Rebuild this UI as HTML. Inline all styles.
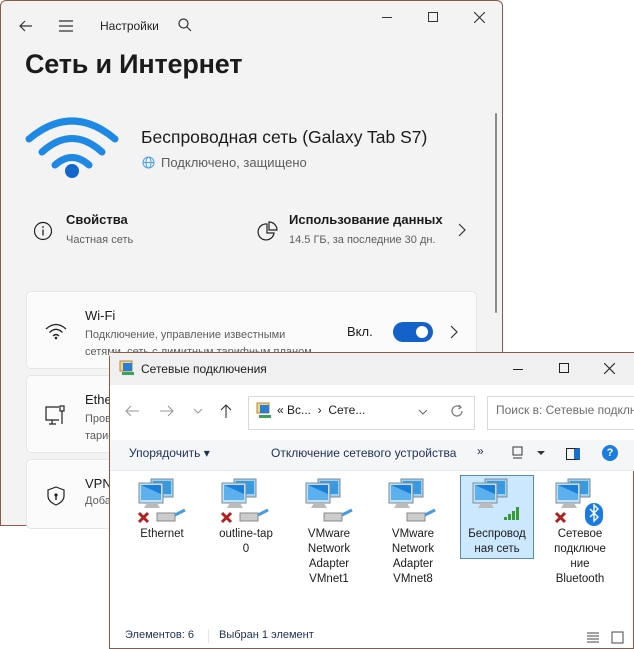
<!DOCTYPE html>
<html><head><meta charset="utf-8"><style>
*{box-sizing:border-box;margin:0;padding:0}
body{width:634px;height:649px;background:#fff;position:relative;overflow:hidden;font-family:"Liberation Sans","Noto Sans CJK SC",sans-serif;color:#1b1b1b}
.a{position:absolute}
#set{left:0;top:0;width:503px;height:526px;background:#f3f3f3;border:1px solid #8a5a48;border-radius:6px 6px 0 0}
.card{position:absolute;left:25px;width:451px;background:#fbfbfb;border:1px solid #e6e6e6;border-radius:5px}
.t{font-size:13px}
.s{font-size:11px;color:#5d5d5d}
#exp{left:109px;top:352px;width:525px;height:297px;background:#fff;border:1px solid #8a5a48;border-radius:6px 0 0 0}
.lbl{position:absolute;font-size:11.5px;text-align:center;width:76px;line-height:15px;color:#1b1b1b}
</style></head><body>
<div id="set" class="a">
 <svg class="a" style="left:16px;top:16px" width="18" height="18"><path d="M15 9H3M8 4L3 9l5 5" stroke="#333" stroke-width="1.2" fill="none"/></svg>
 <svg class="a" style="left:56px;top:16px" width="18" height="18"><path d="M2 4h14M2 9h14M2 14h14" stroke="#333" stroke-width="1.2"/></svg>
 <div class="a" style="left:99px;top:18px;font-size:12px;color:#222">Настройки</div>
 <svg class="a" style="left:176px;top:16px" width="16" height="16"><circle cx="6.5" cy="6.5" r="4.5" stroke="#333" stroke-width="1.2" fill="none"/><path d="M10 10l4 4" stroke="#333" stroke-width="1.2"/></svg>
 <div class="a" style="left:381px;top:16px;width:10px;height:1px;background:#333"></div>
 <div class="a" style="left:427px;top:11px;width:10px;height:10px;border:1px solid #333"></div>
 <svg class="a" style="left:473px;top:11px" width="11" height="11"><path d="M0 0l11 11M11 0L0 11" stroke="#333" stroke-width="1.1"/></svg>
 <div class="a" style="left:24px;top:48px;font-size:27px;font-weight:bold;color:#1b1b1b;letter-spacing:-0.2px">Сеть и Интернет</div>
 <div class="a" style="left:494px;top:112px;width:2px;height:200px;background:#8a8a8a;border-radius:1px"></div>
 <svg class="a" style="left:24px;top:110px" width="95" height="70"><g stroke="#1e88e5" stroke-width="7" fill="none" stroke-linecap="round"><path d="M4 28Q47 -8 90 28"/><path d="M17 41Q47 14 77 41"/><path d="M30 54Q47 39 64 54"/></g><circle cx="47" cy="60" r="7" fill="#1466cc"/></svg>
 <div class="a" style="left:140px;top:126px;font-size:17.5px;color:#1b1b1b">Беспроводная сеть (Galaxy Tab S7)</div>
 <svg class="a" style="left:141px;top:155px" width="13" height="13"><circle cx="6.5" cy="6.5" r="5.5" fill="none" stroke="#4aa0e6"/><ellipse cx="6.5" cy="6.5" rx="2.5" ry="5.5" fill="none" stroke="#4aa0e6"/><path d="M1 6.5h11" stroke="#4aa0e6"/></svg>
 <div class="a" style="left:160px;top:154px;font-size:13px;color:#5d5d5d">Подключено, защищено</div>
 <svg class="a" style="left:32px;top:220px" width="20" height="20"><circle cx="10" cy="10" r="8.5" fill="none" stroke="#222" stroke-width="1.2"/><path d="M10 8.5v6" stroke="#222" stroke-width="1.3"/><circle cx="10" cy="6" r=".9" fill="#222"/></svg>
 <div class="a t" style="left:65px;top:211px;font-weight:bold">Свойства</div>
 <div class="a s" style="left:65px;top:233px">Частная сеть</div>
 <svg class="a" style="left:255px;top:219px" width="22" height="22"><path d="M11 4A8 8 0 1 0 18 13H11Z" fill="none" stroke="#222" stroke-width="1.2"/><path d="M13 2v8h8A8 8 0 0 0 13 2Z" fill="none" stroke="#222" stroke-width="1.2"/></svg>
 <div class="a t" style="left:288px;top:211px;font-weight:bold">Использование данных</div>
 <div class="a s" style="left:288px;top:233px">14.5 ГБ, за последние 30 дн.</div>
 <svg class="a" style="left:456px;top:222px" width="10" height="14"><path d="M2 1l6 6-6 6" stroke="#333" stroke-width="1.2" fill="none"/></svg>
 <div class="card" style="top:290px;height:78px">
  <svg class="a" style="left:18px;top:30px" width="22" height="18"><g stroke="#222" stroke-width="1.3" fill="none"><path d="M1 7Q11 -2 21 7"/><path d="M4.5 10.5Q11 4 17.5 10.5"/><path d="M8 14Q11 11 14 14"/></g><circle cx="11" cy="16" r="1.3" fill="#222"/></svg>
  <div class="a t" style="left:58px;top:16px">Wi-Fi</div>
  <div class="a s" style="left:58px;top:35px;line-height:17px">Подключение, управление известными<br>сетями, сеть с лимитным тарифным планом</div>
  <div class="a t" style="left:320px;top:32px">Вкл.</div>
  <div class="a" style="left:366px;top:30px;width:40px;height:20px;border-radius:10px;background:#1361c9"><div class="a" style="left:23px;top:4px;width:12px;height:12px;border-radius:6px;background:#fff"></div></div>
  <svg class="a" style="left:422px;top:33px" width="10" height="14"><path d="M2 1l6 6-6 6" stroke="#333" stroke-width="1.2" fill="none"/></svg>
 </div>
 <div class="card" style="top:374px;height:78px">
  <svg class="a" style="left:18px;top:29px" width="22" height="22"><g stroke="#222" stroke-width="1.2" fill="none"><path d="M14 2H1v13h13"/><path d="M7 15v4M4 19h7"/><rect x="15" y="1" width="4" height="5"/><path d="M17 6v13"/></g></svg>
  <div class="a t" style="left:58px;top:16px">Ethernet</div>
  <div class="a s" style="left:58px;top:35px;line-height:17px">Проверка<br>тарифный</div>
 </div>
 <div class="card" style="top:458px;height:70px">
  <svg class="a" style="left:19px;top:26px" width="20" height="20"><path d="M10 1L18 4v6c0 4-3.5 7-8 9-4.5-2-8-5-8-9V4Z" fill="none" stroke="#222" stroke-width="1.2"/><circle cx="10" cy="9" r="1.6" fill="#222"/><path d="M10 10v4" stroke="#222" stroke-width="1.4"/></svg>
  <div class="a t" style="left:58px;top:16px">VPN</div>
  <div class="a s" style="left:58px;top:35px">Добавить</div>
 </div>
</div>

<div id="exp" class="a">
 <div class="a" style="left:0;top:0;width:524px;height:32px;background:#f0f0f0"></div>
 <svg class="a" style="left:9px;top:7px" width="17" height="17"><rect x="1" y="1" width="12" height="10" fill="#f4d48a" stroke="#b08a3a"/><rect x="4" y="3" width="9" height="8" fill="#2a7fd4"/><rect x="3" y="12" width="12" height="3" fill="#3aa05a"/></svg>
 <div class="a" style="left:31px;top:9px;font-size:12px;color:#1b1b1b">Сетевые подключения</div>
 <div class="a" style="left:403px;top:16px;width:10px;height:1px;background:#222"></div>
 <div class="a" style="left:449px;top:10px;width:10px;height:10px;border:1px solid #222"></div>
 <svg class="a" style="left:494px;top:10px" width="11" height="11"><path d="M0 0l11 11M11 0L0 11" stroke="#222" stroke-width="1.1"/></svg>
 <div class="a" style="left:0;top:32px;width:524px;height:55px;background:#fff"></div>
 <svg class="a" style="left:14px;top:51px" width="16" height="14"><path d="M15 7H2M7 2L2 7l5 5" stroke="#999" stroke-width="1.1" fill="none"/></svg>
 <svg class="a" style="left:49px;top:51px" width="16" height="14"><path d="M1 7h13M9 2l5 5-5 5" stroke="#999" stroke-width="1.1" fill="none"/></svg>
 <svg class="a" style="left:82px;top:54px" width="12" height="8"><path d="M2 2l4 4 4-4" stroke="#999" stroke-width="1" fill="none"/></svg>
 <svg class="a" style="left:109px;top:50px" width="14" height="16"><path d="M7 15V2M2 7l5-5 5 5" stroke="#333" stroke-width="1.1" fill="none"/></svg>
 <div class="a" style="left:138px;top:43px;width:227px;height:34px;border:1px solid #d9d9d9"></div>
 <svg class="a" style="left:146px;top:49px" width="18" height="18"><rect x="1" y="1" width="12" height="10" fill="#f4d48a" stroke="#b08a3a"/><rect x="4" y="3" width="9" height="8" fill="#2a7fd4"/><rect x="3" y="13" width="12" height="3" fill="#3aa05a"/></svg>
 <div class="a" style="left:167px;top:50px;font-size:12px;color:#1b1b1b">«&nbsp;Вс...&nbsp;&nbsp;›&nbsp;&nbsp;Сете...</div>
 <svg class="a" style="left:307px;top:55px" width="12" height="8"><path d="M2 2l4 4 4-4" stroke="#666" stroke-width="1" fill="none"/></svg>
 <svg class="a" style="left:340px;top:51px" width="14" height="14"><path d="M12 7A5 5 0 1 1 10 3" stroke="#777" stroke-width="1.2" fill="none"/><path d="M9 1l2 2.5-2.5 1.5" stroke="#777" stroke-width="1.2" fill="none"/></svg>
 <div class="a" style="left:377px;top:43px;width:150px;height:34px;border:1px solid #d9d9d9"></div>
 <div class="a" style="left:386px;top:50px;font-size:12px;color:#6d6d6d;white-space:nowrap">Поиск в: Сетевые подклн</div>
 <div class="a" style="left:0;top:87px;width:524px;height:31px;background:#f5f6f7;border-bottom:1px solid #e8e8e8"></div>
 <div class="a" style="left:19px;top:93px;font-size:12px;color:#1e3050">Упорядочить ▾</div>
 <div class="a" style="left:161px;top:93px;font-size:12px;color:#1e3050">Отключение сетевого устройства</div>
 <div class="a" style="left:367px;top:91px;font-size:12px;color:#1e3050">»</div>
 <svg class="a" style="left:402px;top:93px" width="34" height="14"><rect x="1" y="1" width="9" height="8" fill="none" stroke="#333"/><path d="M1 12h9" stroke="#333"/><path d="M25 5l4 4 4-4z" fill="#333"/></svg>
 <div class="a" style="left:456px;top:95px;width:14px;height:12px;border:1px solid #222;border-right:6px solid #1a6fd0"></div>
 <div class="a" style="left:492px;top:92px;width:16px;height:16px;border-radius:8px;background:#1a7be0;color:#fff;font-size:11px;font-weight:bold;text-align:center;line-height:16px">?</div>
 <div class="a" style="left:350px;top:122px;width:74px;height:84px;background:#cce8ff;border:1px solid #5a8ab8"></div>
 <!-- icons -->
 <svg class="a" style="left:27px;top:124px" width="52" height="50"><g id="n"><rect x="14" y="2" width="22" height="18" fill="#9ed0f0" stroke="#7a8a9a"/><rect x="16" y="4" width="18" height="13" fill="#3a9ae0"/><rect x="2" y="6" width="24" height="20" fill="#bfe0f5" stroke="#7a8a9a"/><rect x="4" y="8" width="20" height="15" fill="#1a7fd8"/><path d="M4 8l20 9v6H4z" fill="#5cb0ee"/><path d="M10 26h10l3 5H7z" fill="#bbb"/></g><path d="M2 36l9 9M11 36l-9 9" stroke="#b02020" stroke-width="3"/><rect x="20" y="36" width="18" height="8" fill="#ccc" stroke="#888"/><path d="M38 38l10-5" stroke="#4a9ae0" stroke-width="3"/></svg>
 <svg class="a" style="left:110px;top:124px" width="52" height="50"><rect x="14" y="2" width="22" height="18" fill="#9ed0f0" stroke="#7a8a9a"/><rect x="16" y="4" width="18" height="13" fill="#3a9ae0"/><rect x="2" y="6" width="24" height="20" fill="#bfe0f5" stroke="#7a8a9a"/><rect x="4" y="8" width="20" height="15" fill="#1a7fd8"/><path d="M4 8l20 9v6H4z" fill="#5cb0ee"/><path d="M10 26h10l3 5H7z" fill="#bbb"/><path d="M2 36l9 9M11 36l-9 9" stroke="#b02020" stroke-width="3"/><rect x="20" y="36" width="18" height="8" fill="#ccc" stroke="#888"/><path d="M38 38l10-5" stroke="#4a9ae0" stroke-width="3"/></svg>
 <svg class="a" style="left:194px;top:124px" width="52" height="50"><rect x="14" y="2" width="22" height="18" fill="#9ed0f0" stroke="#7a8a9a"/><rect x="16" y="4" width="18" height="13" fill="#3a9ae0"/><rect x="2" y="6" width="24" height="20" fill="#bfe0f5" stroke="#7a8a9a"/><rect x="4" y="8" width="20" height="15" fill="#1a7fd8"/><path d="M4 8l20 9v6H4z" fill="#5cb0ee"/><path d="M10 26h10l3 5H7z" fill="#bbb"/><rect x="20" y="36" width="18" height="8" fill="#ccc" stroke="#888"/><path d="M38 38l10-5" stroke="#4a9ae0" stroke-width="3"/></svg>
 <svg class="a" style="left:277px;top:124px" width="52" height="50"><rect x="14" y="2" width="22" height="18" fill="#9ed0f0" stroke="#7a8a9a"/><rect x="16" y="4" width="18" height="13" fill="#3a9ae0"/><rect x="2" y="6" width="24" height="20" fill="#bfe0f5" stroke="#7a8a9a"/><rect x="4" y="8" width="20" height="15" fill="#1a7fd8"/><path d="M4 8l20 9v6H4z" fill="#5cb0ee"/><path d="M10 26h10l3 5H7z" fill="#bbb"/><rect x="20" y="36" width="18" height="8" fill="#ccc" stroke="#888"/><path d="M38 38l10-5" stroke="#4a9ae0" stroke-width="3"/></svg>
 <svg class="a" style="left:361px;top:124px" width="52" height="50"><rect x="14" y="2" width="22" height="18" fill="#9ed0f0" stroke="#7a8a9a"/><rect x="16" y="4" width="18" height="13" fill="#3a9ae0"/><rect x="2" y="6" width="24" height="20" fill="#bfe0f5" stroke="#7a8a9a"/><rect x="4" y="8" width="20" height="15" fill="#1a7fd8"/><path d="M4 8l20 9v6H4z" fill="#5cb0ee"/><path d="M10 26h10l3 5H7z" fill="#bbb"/><g fill="#3a9a3a"><rect x="33" y="40" width="3" height="3"/><rect x="37" y="37" width="3" height="6"/><rect x="41" y="34" width="3" height="9"/><rect x="45" y="30" width="3" height="13"/></g></svg>
 <svg class="a" style="left:444px;top:124px" width="52" height="50"><rect x="14" y="2" width="22" height="18" fill="#9ed0f0" stroke="#7a8a9a"/><rect x="16" y="4" width="18" height="13" fill="#3a9ae0"/><rect x="2" y="6" width="24" height="20" fill="#bfe0f5" stroke="#7a8a9a"/><rect x="4" y="8" width="20" height="15" fill="#1a7fd8"/><path d="M4 8l20 9v6H4z" fill="#5cb0ee"/><path d="M10 26h10l3 5H7z" fill="#bbb"/><path d="M2 36l9 9M11 36l-9 9" stroke="#b02020" stroke-width="3"/><rect x="31" y="26" width="18" height="23" rx="9" fill="#1a7be0"/><path d="M36 32l8 8-4 4v-16l4 4-8 8" stroke="#fff" stroke-width="1.4" fill="none"/></svg>
 <div class="lbl" style="left:14px;top:174px">Ethernet</div>
 <div class="lbl" style="left:98px;top:174px">outline-tap<br>0</div>
 <div class="lbl" style="left:181px;top:174px">VMware<br>Network<br>Adapter<br>VMnet1</div>
 <div class="lbl" style="left:265px;top:174px">VMware<br>Network<br>Adapter<br>VMnet8</div>
 <div class="lbl" style="left:349px;top:174px">Беспровод<br>ная сеть</div>
 <div class="lbl" style="left:432px;top:174px">Сетевое<br>подключе<br>ние<br>Bluetooth</div>
 <div class="a" style="left:15px;top:276px;font-size:11px;color:#1e3050">Элементов: 6</div>
 <div class="a" style="left:98px;top:276px;width:1px;height:14px;background:#e5e5e5"></div>
 <div class="a" style="left:109px;top:276px;font-size:11px;color:#1e3050">Выбран 1 элемент</div>
 <svg class="a" style="left:476px;top:278px" width="40" height="14"><path d="M1 2h12M1 5h12M1 8h12M1 11h12" stroke="#444"/><rect x="26" y="1" width="11" height="11" fill="none" stroke="#444"/></svg>
</div>
</body></html>
